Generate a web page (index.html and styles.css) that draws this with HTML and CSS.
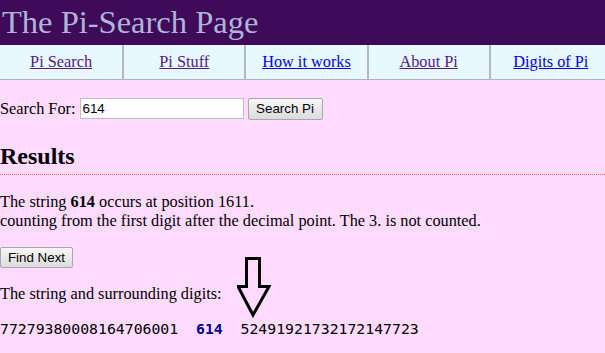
FILE: index.html
```html
<!DOCTYPE html>
<html lang="en">

<head>
    <meta charset="UTF-8">
    <title>The Pi-Search Page</title>
    <link rel="stylesheet" href="styles.css">
</head>

<body>
    <!-- Header -->
    <header class="top">
        <h1>The Pi-Search Page</h1>
    </header>

    <!-- Navigation -->
    <nav class="menu">
        <div class="menu-cell"><a class="visited" href="#">Pi Search</a></div>
        <div class="menu-cell"><a class="visited" href="#">Pi Stuff</a></div>
        <div class="menu-cell"><a href="#">How it works</a></div>
        <div class="menu-cell"><a class="visited" href="#">About Pi</a></div>
        <div class="menu-cell"><a href="#">Digits of Pi</a></div>
    </nav>

    <!-- Search form -->
    <form class="search">
        <label for="q">Search For:</label>
        <input id="q" type="text" value="614">
        <button type="button">Search Pi</button>
    </form>

    <!-- Results -->
    <div class="results">
        <h2>Results</h2>
        <p class="found">The string <b>614</b> occurs at position 1611.<br>
            counting from the first digit after the decimal point. The 3. is not counted.</p>

        <button type="button" class="next">Find Next</button>

        <p class="around">The string and surrounding digits:</p>
        <div class="digits">77279380008164706001  <span class="hit">614</span>  52491921732172147723</div>

        <!-- pointer arrow -->
        <svg class="arrow" width="34" height="62" viewBox="0 0 34 62">
            <path d="M9.5 1.5 H22.5 V29.5 H32 L16 58 L1 29.5 H9.5 Z"
                fill="none" stroke="#000" stroke-width="3" stroke-linejoin="miter"/>
        </svg>
    </div>
</body>

</html>
```

FILE: styles.css
```css
html {
    overflow: hidden;
}

body {
    margin: 0;
    background-color: #ffdcff;
    color: #000;
    font-family: "Liberation Serif", "Times New Roman", serif;
    font-size: 16.3px;
}

/* Header */
.top {
    background-color: #3f0a5a;
    height: 45px;
}

.top h1 {
    margin: 0;
    padding-left: 2px;
    font-size: 32.5px;
    font-weight: normal;
    line-height: 45px;
    color: #aeb6d6;
    white-space: nowrap;
}

/* Navigation */
.menu {
    display: grid;
    grid-template-columns: repeat(5, 122.2px);
    width: 611px;
    background-color: #e8f8ff;
    border-bottom: 1px solid #b4b4b4;
}

.menu-cell {
    height: 34px;
    line-height: 34px;
    text-align: center;
    border-left: 2px solid #b8b8b8;
}

.menu-cell:first-child {
    border-left: none;
}

.menu a {
    color: #0000ee;
}

.menu a.visited {
    color: #551a8b;
}

/* Search form */
.search {
    display: flex;
    align-items: center;
    gap: 4px;
    margin: 17px 0 0;
    height: 23px;
}

.search input {
    width: 158px;
    height: 17px;
    padding: 1px 2px;
    border: 1px solid #c0c0c0;
    font-family: "Liberation Sans", Arial, sans-serif;
    font-size: 13.33px;
    color: #000;
    background: #fff;
}

button {
    font-family: "Liberation Sans", Arial, sans-serif;
    font-size: 13.33px;
    color: #000;
    background: linear-gradient(#f6f6f6, #dcdcdc);
    border: 1px solid #a8a8a8;
    border-radius: 2px;
    padding: 0 6px;
}

.search button {
    width: 75px;
    height: 22px;
}

/* Results */
.results {
    position: relative;
}

.results h2 {
    margin: 22px 0 0;
    font-size: 24px;
    line-height: 28px;
    padding-bottom: 4px;
    border-bottom: 1px dotted #ff5c5c;
}

.found {
    margin: 17px 0 0;
    line-height: 19px;
}

.next {
    margin-top: 17px;
    width: 73px;
    height: 21px;
    display: block;
}

.around {
    margin: 17px 0 0;
    line-height: 18px;
}

.digits {
    margin-top: 17px;
    font-family: "DejaVu Sans Mono", "Liberation Mono", monospace;
    font-size: 14.8px;
    line-height: 18px;
    white-space: pre;
}

.hit {
    color: #000099;
    font-weight: bold;
}

.arrow {
    position: absolute;
    left: 237px;
    top: 115px;
}
```
